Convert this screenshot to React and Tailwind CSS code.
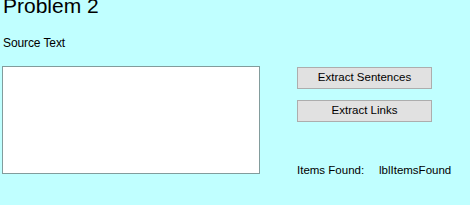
export default function App() {
  return (
    <div className="w-[470px] h-[205px] bg-[#c0ffff] overflow-hidden text-black" style={{ fontFamily: '"Liberation Sans", Arial, sans-serif' }}>
      <div className="pl-[3px] -mt-[5px] text-[21px] leading-[21px]">Problem 2</div>
      <div className="pl-[3px] mt-[21px] text-[12px] leading-[12px] tracking-[-0.1px]">Source Text</div>
      <div className="flex mt-[17px] pl-[2px]">
        <textarea className="w-[258px] h-[108px] bg-white border border-[#829c9c] resize-none outline-none" />
        <div className="flex flex-col ml-[37px] mt-[1px]">
          <button className="w-[135px] h-[22px] bg-[#e1e1e1] border border-[#adadad] text-[11.5px] leading-none">Extract Sentences</button>
          <button className="w-[135px] h-[22px] mt-[11px] bg-[#e1e1e1] border border-[#adadad] text-[11.5px] leading-none">Extract Links</button>
          <div className="flex mt-[42px] text-[11.5px] leading-[12px]">
            <span className="w-[82px]">Items Found:</span>
            <span>lblItemsFound</span>
          </div>
        </div>
      </div>
    </div>
  );
}
